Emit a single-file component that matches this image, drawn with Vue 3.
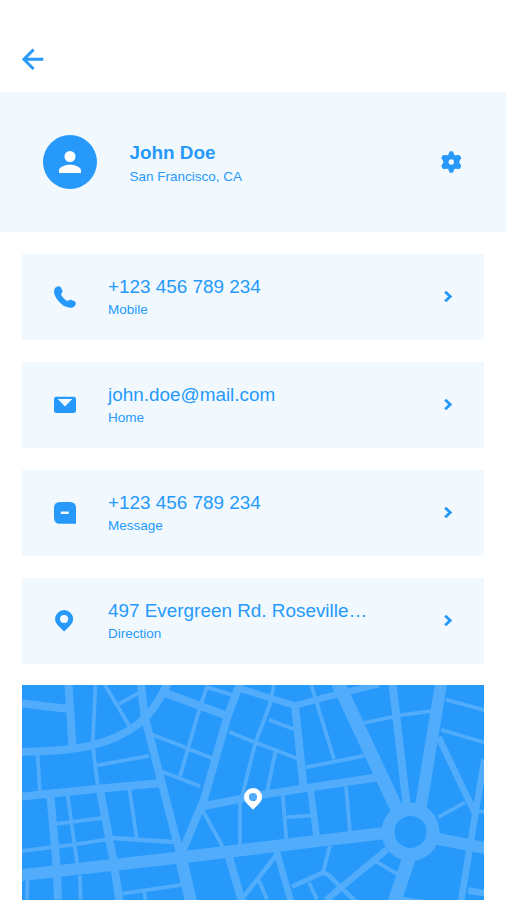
<script setup>
const contacts = [
  { icon: 'phone', value: '+123 456 789 234', label: 'Mobile' },
  { icon: 'mail', value: 'john.doe@mail.com', label: 'Home' },
  { icon: 'message', value: '+123 456 789 234', label: 'Message' },
  { icon: 'pin', value: '497 Evergreen Rd. Roseville…', label: 'Direction' },
]

// Streets grouped by stroke width
const roads = [
  {
    width: 3.8,
    d: `M95.5 685L92.7 745L98 789 M104.5 685L129.5 727 M119 705L140 693
      M151 735L176 744.5L212 759 M161 772L200 787 M96.5 766L149 756.5
      M37.5 755L40 794 M67.5 795L77.5 866 M56 824.5L103 818.5
      M22 851.5L76 845L107 840 M129.5 790L136.7 839 M27.5 880L27 900
      M80 876L80.5 900 M122.5 894L190 884 M144 892L145.5 900
      M207.5 686L200 708L180 777 M207 688L234 696.5 M274 685L270 705L255.5 743L241.5 799
      M269 720.5L294 730 M229 732.5L256 743.5L298 759.5 M275.7 751L266.5 795
      M306 768L364 756.5 M311 685L334 760 M282.7 795L286.3 840 M286 818L312 816
      M240 801V846 M201 808L222.5 847 M259 881L267 900 M309 883L317 900
      M330 846L323 873 M363 724L401 716L431 712 M446 700.5L484.500 711
      M441 730.5L484.500 743.3 M438 818L465 803 M346 787L350 833 M376 862L399 875.5
      M476 812H484.500 M402 899L430 903`,
  },
  { width: 4.6, d: 'M112 838.5L173 842.5 M276 856L243 898 M292 887L323 873L328 875L341 888L355 901' },
  {
    width: 6.6,
    d: `M240 689.5L295 706.5L326 698L379 685 M310 786L317 840 M276 850L291 902
      M438.5 738L476 816 M484.5 760L475 816L461 902 M468 891L484.500 893.5 M387 850L341 888L326 901`,
  },
  {
    width: 8,
    d: `M21 704.3L67 709.5 M68.5 685L72.5 748 M21 797.3L98 789.5L160 784
      M50.3 795L56.7 867L58 900 M99.5 788L113.5 862L119.5 902
      M21 752.5C80 752 112 745 138 725C153 713 160 699 168 684
      M141 685L144.5 717L181 858 M163 693L227 716.5 M240 684L227 719L204 800L181 855
      M295 706L303.5 788 M200 807.5L258 796L378 778 M228 854L242 902 M392.5 685L407 809`,
  },
  { width: 12, d: 'M21 875.5L180 858L330 840L390 833 M180 855L191 902 M441 685L420 812 M430 838L485 848.5' },
  { width: 13.5, d: 'M337 682L398 812 M410 856L394 903' },
]
</script>

<template>
  <main class="screen">
    <header class="topbar">
      <svg class="back" viewBox="0 0 22 22">
        <path d="M21.300 11.300H1.800M11.600 1.600L1.900 11.300l9.700 9.700" />
      </svg>
    </header>

    <section class="profile">
      <div class="avatar">
        <svg viewBox="0 0 22 22">
          <circle cx="11" cy="5.5" r="5.5" />
          <path d="M0 22v-2.6c0-3.6 7-5.6 11-5.6s11 2 11 5.6V22z" />
        </svg>
      </div>
      <div class="who">
        <h1>John Doe</h1>
        <p>San Francisco, CA</p>
      </div>
      <svg class="gear" viewBox="0 0 22 22">
        <path
          fill-rule="evenodd"
          d="M10.300.2h2q.6 0 .8.600l1.200 3q.3.500.9.500l3.800-.3q.6 0 .9.500l1.200 2.100q.3.500-.1 1L19.400 10.300q-.4.700 0 1.400l1.600 2.700q.4.500.1 1l-1.200 2.100q-.3.500-.9.500l-3.800-.3q-.6 0-.9.500l-1.200 3q-.2.600-.8.600h-2q-.6 0-.8-.6l-1.200-3q-.3-.5-.9-.5l-3.800.3q-.6 0-.9-.5L1.500 15.400q-.3-.5.1-1L3.200 11.700q.4-.7 0-1.400L1.600 7.600q-.4-.5-.1-1L2.700 4.500q.3-.5.900-.5l3.800.3q.6 0 .9-.5l1.200-3Q9.700.2 10.300.2zM11.300 8.300a2.700 2.700 0 1 0 0 5.400a2.700 2.700 0 0 0 0-5.400z"
        />
      </svg>
    </section>

    <section class="list">
      <article v-for="item in contacts" :key="item.label" class="card">
        <svg class="icon" viewBox="0 0 22 22">
          <path
            v-if="item.icon === 'phone'"
            d="M1.300 1.700C2.700.2 5.500-.5 6.600.900L8.300 4.300C8.900 5.900 7.900 7 6.900 8.200C8 10.900 10.800 13.800 13.800 15.100C14.900 14 16.200 13.400 17.600 13.900L21 15.500C22.500 16.500 21.700 19.200 20.200 20.600C18.400 22.300 15.300 22.100 12.800 21.100C7 18.700 2.300 13.700.5 8.200C-.2 6 .1 3.100 1.300 1.700Z"
          />
          <path
            v-else-if="item.icon === 'mail'"
            fill-rule="evenodd"
            d="M2.500 2.800h17q2.500 0 2.500 2.500v11.200q0 2.500-2.500 2.500h-17q-2.500 0-2.500-2.500V5.300q0-2.500 2.500-2.500zM3.700 5.100L11 12.400l7.300-7.300z"
          />
          <path
            v-else-if="item.icon === 'message'"
            fill-rule="evenodd"
            d="M6 0h10q6 0 6 6v15.700H6q-6 0-6-6V6q0-6 6-6zM6.700 9.500v2.500h8V9.500z"
          />
          <path
            v-else
            fill-rule="evenodd"
            d="M10.100 0a9 9 0 0 1 9 9c0 3.600-1.900 5.400-3.600 7.200L10.100 21.500 4.700 16.200C3 14.400 1.100 12.600 1.100 9a9 9 0 0 1 9-9zM10.100 4.900a4.100 4.100 0 1 0 0 8.200a4.100 4.100 0 0 0 0-8.200z"
          />
        </svg>
        <div class="info">
          <p class="value">{{ item.value }}</p>
          <p class="label">{{ item.label }}</p>
        </div>
        <svg class="chevron" viewBox="0 0 8 12">
          <path d="M1.200.8L6.200 5.500l-5 4.700" />
        </svg>
      </article>
    </section>

    <section class="map">
      <svg class="streets" viewBox="22 685.900 462.800 214.500" preserveAspectRatio="none">
        <path v-for="road in roads" :key="road.width" :d="road.d" :stroke-width="road.width" />
        <circle class="ring" cx="410.500" cy="832.500" r="22.500" />
      </svg>
      <svg class="marker" viewBox="0 0 18 22">
        <path
          fill-rule="evenodd"
          d="M9 0a9 9 0 0 1 9 9c0 3.600-1.900 5.400-3.600 7.200L9 21.700 3.600 16.200C1.900 14.400 0 12.600 0 9a9 9 0 0 1 9-9zM9 4.900a4.100 4.100 0 1 0 0 8.200a4.100 4.100 0 0 0 0-8.200z"
        />
      </svg>
    </section>
  </main>
</template>

<style>
body {
  background: #fff;
}
</style>

<style scoped>
.screen {
  box-sizing: border-box;
  width: 506px;
  height: 900px;
  display: flex;
  flex-direction: column;
  overflow: hidden;
  background: #fff;
  color: #2699fb;
  font-family: "Liberation Sans", Arial, sans-serif;
}
h1,
p {
  margin: 0;
}
svg {
  display: block;
  flex: none;
  fill: #2699fb;
}
.topbar {
  height: 92px;
  flex: none;
  box-sizing: border-box;
  padding: 48px 22px 0;
}
.back {
  width: 22px;
  height: 22px;
}
.back path,
.chevron path {
  fill: none;
  stroke: #2699fb;
  stroke-width: 2.900;
}
.back {
  overflow: visible;
}
.chevron {
  overflow: visible;
}
.profile {
  height: 140px;
  flex: none;
  box-sizing: border-box;
  display: flex;
  align-items: center;
  padding: 0 44px 0 43px;
  background: #f1f9ff;
}
.avatar {
  width: 54px;
  height: 54px;
  border-radius: 50%;
  background: #2699fb;
  display: flex;
  align-items: center;
  justify-content: center;
}
.avatar svg {
  width: 22px;
  height: 22px;
  fill: #fff;
}
.who {
  flex: 1;
  margin-left: 32.400px;
  padding-top: 5px;
}
.who h1 {
  font-size: 18.900px;
  line-height: 24px;
  font-weight: 700;
}
.who p {
  font-size: 13.500px;
  line-height: 23px;
}
.gear {
  width: 22px;
  height: 22px;
}
.list {
  flex: none;
  display: flex;
  flex-direction: column;
  gap: 21.600px;
  padding: 21.600px 21.600px 0;
}
.card {
  height: 86.400px;
  box-sizing: border-box;
  display: flex;
  align-items: center;
  padding: 0 32px 0 32.400px;
  background: #f1f9ff;
}
.icon {
  width: 22px;
  height: 22px;
}
.info {
  width: 264px;
  margin-left: 32px;
}
.value {
  font-size: 18.900px;
  line-height: 25px;
  white-space: nowrap;
}
.label {
  font-size: 13.500px;
  line-height: 21px;
}
.chevron {
  width: 8px;
  height: 12px;
  margin-left: auto;
}
.map {
  position: relative;
  height: 215px;
  flex: none;
  margin: 21.200px 21.600px 0;
  overflow: hidden;
  background: #2699fb;
}
.streets {
  width: 100%;
  height: 100%;
}
.streets path {
  fill: none;
  stroke: #51adfc;
}
.streets .ring {
  fill: #2699fb;
  stroke: #51adfc;
  stroke-width: 13;
}
.marker {
  position: absolute;
  left: 50%;
  top: 102.500px;
  width: 18px;
  height: 22px;
  transform: translateX(-50%);
  fill: #fff;
}
</style>
